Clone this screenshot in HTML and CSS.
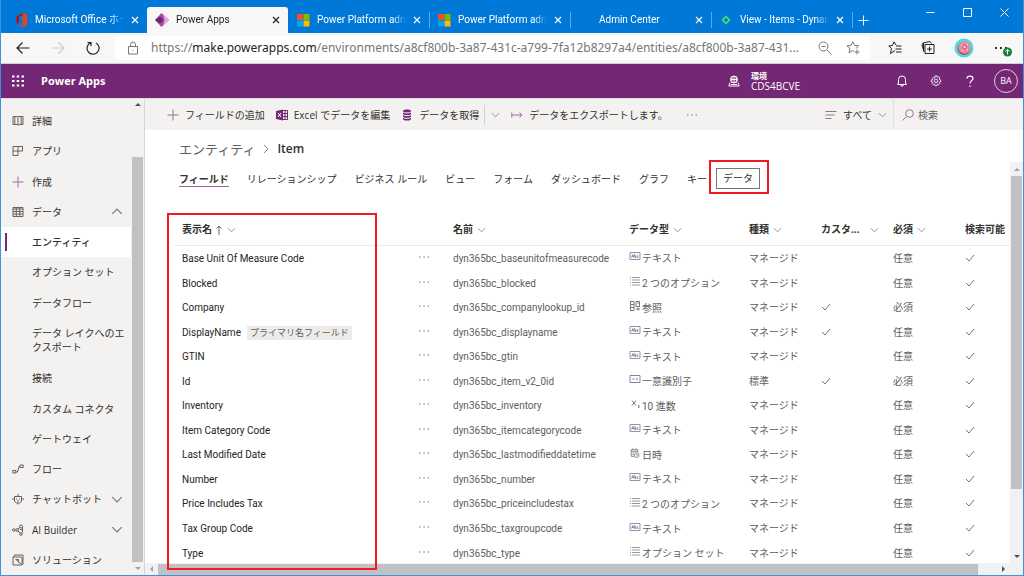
FILE: index.html
```html
<!DOCTYPE html>
<html lang="ja">
<head>
<meta charset="utf-8">
<title>Power Apps</title>
<link rel="stylesheet" href="styles.css">
</head>
<body>
<svg class="defs" aria-hidden="true">
  <symbol id="x" viewBox="0 0 8 8"><path d="M1 1l6 6M7 1L1 7"/></symbol>
  <symbol id="down" viewBox="0 0 10 6"><path d="M1 1l4 4 4-4"/></symbol>
  <symbol id="up" viewBox="0 0 10 6"><path d="M1 5l4-4 4 4"/></symbol>
  <symbol id="check" viewBox="0 0 10 8"><path d="M1 4l3 3 5-6"/></symbol>
  <symbol id="dots" viewBox="0 0 12 2"><path d="M1 1h1.500M5.300 1h1.500M9.600 1h1.500"/></symbol>
  <symbol id="ms" viewBox="0 0 14 14"><path fill="#f25022" d="M1 1h6v6H1z"/><path fill="#7fba00" d="M7.500 1h6v6h-6z"/><path fill="#00a4ef" d="M1 7.500h6v6H1z"/><path fill="#ffb900" d="M7.500 7.500h6v6h-6z"/></symbol>
  <symbol id="abc" viewBox="0 0 12 10"><path stroke="#8a95b5" d="M1 1.500h10v7H1z"/><path stroke-width=".8" d="M2.500 6.500L3.800 3.500 5 6.500M3 5.500h1.500M5.800 3v3.500h1V4.800h-1M9.500 4.800H8.200v1.700h1.300"/></symbol>
  <symbol id="list" viewBox="0 0 12 10"><path stroke="#999" d="M1 1.500h1M1 4h1M1 6.500h1M1 9h1M3 1.500h8M3 4h8M3 6.500h8M3 9h8"/></symbol>
  <symbol id="lookup" viewBox="0 0 12 10"><path d="M1.500 .5v9M1 .5h4v9H1M1 3.500h4M1 6.500h4M7 .5h3.500v5M7 .5v5h4M8.500 2h2M7 8h4M9 6.500v3"/></symbol>
  <symbol id="guid" viewBox="0 0 12 10"><path stroke="#7d88ab" d="M1 1.500h10v7H1z"/><path d="M3.500 5h2M7 5h2"/></symbol>
  <symbol id="decimal" viewBox="0 0 12 10"><path d="M3 1.500l4 5M7 1.500l-4 5M9 6.500h1v2H9"/></symbol>
  <symbol id="date" viewBox="0 0 12 12"><path d="M5 10H1.500V2h8v3M1.500 4h8M3.500 .5v2M7.500 .5v2M3 6h2M3 8h1.500"/><circle cx="8" cy="8.500" r="2.800"/><path d="M8 7v1.500h1.500"/></symbol>
</svg>

<div class="window">
  <header class="tabstrip">
    <div class="tab">
      <svg class="tab-icon" viewBox="0 0 14 14"><path fill="#e8431b" d="M9 0l4 1.500v11L9 14l-6-2 5.500.5V2.500L5 3.500v6L2.500 11V3.500z"/><path fill="#a31410" d="M9 0L2.500 3.500V11L5 9.500v-6l3.500-1z"/></svg>
      <span class="tab-title">Microsoft Office ホー</span>
      <button class="tab-close" aria-label="閉じる"><svg><use href="#x"/></svg></button>
    </div>
    <div class="tab current">
      <svg class="tab-icon" viewBox="0 0 14 14"><path fill="#9f4aa0" d="M6.500 0L14 7l-7.500 7L0 7z"/><path fill="#e3a5df" d="M8 1.500L14 7l-6 5.500L9.500 7z"/><path fill="#6f2272" d="M5 3.500L8.500 7 5 10.500 0 7z"/></svg>
      <span class="tab-title">Power Apps</span>
      <button class="tab-close" aria-label="閉じる"><svg><use href="#x"/></svg></button>
    </div>
    <div class="tab">
      <svg class="tab-icon"><use href="#ms"/></svg>
      <span class="tab-title">Power Platform admi</span>
      <button class="tab-close" aria-label="閉じる"><svg><use href="#x"/></svg></button>
    </div>
    <div class="tab divided">
      <svg class="tab-icon"><use href="#ms"/></svg>
      <span class="tab-title">Power Platform admi</span>
      <button class="tab-close" aria-label="閉じる"><svg><use href="#x"/></svg></button>
    </div>
    <div class="tab divided">
      <span class="tab-icon"></span>
      <span class="tab-title">Admin Center</span>
      <button class="tab-close" aria-label="閉じる"><svg><use href="#x"/></svg></button>
    </div>
    <div class="tab divided">
      <svg class="tab-icon" viewBox="0 0 14 14"><path fill="#0c8b8b" d="M7 0l1.500 3.500h2v2L14 7l-3.500 1.500v2h-2L7 14l-1.500-3.500h-2v-2L0 7l3.500-1.500v-2h2z"/><path fill="#38d6c0" d="M7 2.500L11.500 7 7 11.500 2.500 7z"/><path fill="#08706f" d="M7 5l2 2-2 2-2-2z"/></svg>
      <span class="tab-title">View - Items - Dynar</span>
      <button class="tab-close" aria-label="閉じる"><svg><use href="#x"/></svg></button>
    </div>
    <button class="new-tab divided" aria-label="新しいタブ"><svg viewBox="0 0 12 12"><path d="M6 .5v11M.5 6h11"/></svg></button>
    <div class="window-buttons">
      <button aria-label="最小化"><svg viewBox="0 0 9 9"><path d="M.5 4.500h8"/></svg></button>
      <button aria-label="最大化"><svg viewBox="0 0 9 9"><path d="M.5.5h8v8h-8z"/></svg></button>
      <button aria-label="閉じる"><svg viewBox="0 0 9 9"><path d="M.5.5l8 8M8.500.5l-8 8"/></svg></button>
    </div>
  </header>

  <div class="toolbar">
    <button class="nav-btn" aria-label="戻る"><svg viewBox="0 0 14 14"><path d="M13.500 7H1M6.500 1.500L1 7l5.500 5.500"/></svg></button>
    <button class="nav-btn faded" aria-label="進む"><svg viewBox="0 0 14 14"><path d="M.5 7H13M7.500 1.500L13 7l-5.500 5.500"/></svg></button>
    <button class="nav-btn" aria-label="更新"><svg viewBox="0 0 14 14"><path d="M4.500 1.800A6 6 0 1 0 10 2M1.500 1.500h3.500V5"/></svg></button>
    <div class="address">
      <svg class="lock" viewBox="0 0 12 14"><path d="M1.500 5.500h9v7.500h-9zM3.500 5.500V3.500a2.500 2.500 0 0 1 5 0v2M6 9v.8"/></svg>
      <div class="url" role="textbox" contenteditable="true" aria-label="アドレス">https://<span class="host">make.powerapps.com</span>/environments/a8cf800b-3a87-431c-a799-7fa12b8297a4/entities/a8cf800b-3a87-431...</div>
      <button aria-label="縮小"><svg viewBox="0 0 14 14"><circle cx="5.500" cy="5.500" r="4.500"/><path d="M9 9l4.500 4.500M3.500 5.500h4"/></svg></button>
      <button aria-label="お気に入りに追加"><svg viewBox="0 0 14 14"><path d="M8 10.300L6.500 9.500 3 12l1-4.500L1 4.800l4-.5L6.800.8l1.800 3.500 4 .5L9.800 7.500M11 8.500v5M8.500 11h5"/></svg></button>
    </div>
    <div class="browser-tools">
      <button aria-label="お気に入り"><svg viewBox="0 0 14 14"><path d="M8 4L6 .8 4.500 4.500.8 5 3.500 7.500 2.500 12.500 7 9.500M8 5h5.500M7.500 8h6M8 11h5.500"/></svg></button>
      <button aria-label="コレクション"><svg viewBox="0 0 14 14"><path d="M4 3.500h9v9H4zM8.500 5.500v5M6 8h5M3 11L1 4l1-2 7-1.500 1.500 2M2.500 10V2"/></svg></button>
      <button aria-label="プロファイル"><svg class="profile" viewBox="0 0 20 20"><circle cx="10" cy="10" r="9.500" fill="#52d7df" stroke="none"/><circle cx="10" cy="10.500" r="6.500" fill="#a35f3f" stroke="none"/><circle cx="10.500" cy="9.500" r="6" fill="#f283ac" stroke="none"/><circle cx="10.500" cy="9" r="1.800" fill="#d8e8ec" stroke="#a95870"/><path stroke="#fff5a0" d="M7 7l1 1M13 12l1-1M8 12l1 1M13 6l1 1"/></svg></button>
      <button aria-label="設定など"><svg class="more" viewBox="0 0 20 20"><path stroke-width="1.800" d="M2 10h1.800M7 10h1.800M12 10h1.800"/><circle cx="14.500" cy="14" r="4.500" fill="#168038" stroke="none"/><path stroke="#fff" d="M14.500 16.500v-5M12.500 13.500l2-2 2 2"/></svg></button>
    </div>
  </div>

  <header class="appbar">
    <button class="waffle" aria-label="アプリ起動ツール"><svg viewBox="0 0 12 12"><path d="M0 1.500h2.500M4.700 1.500h2.500M9.500 1.500H12M0 6h2.500M4.700 6h2.500M9.500 6H12M0 10.500h2.500M4.700 10.500h2.500M9.500 10.500H12"/></svg></button>
    <span class="brand">Power Apps</span>
    <button class="environment">
      <svg viewBox="0 0 12 12"><circle cx="6" cy="4.500" r="3.500"/><path d="M2.500 4.500h7M6 1v7M4.200 1.700c-.8 2-.8 4 0 6M7.800 1.700c.8 2 .8 4 0 6M2 7.500L.8 11h10.400L10 7.500M3 9.500h6"/></svg>
      <span class="env-text"><b>環境</b><span>CDS4BCVE</span></span>
    </button>
    <div class="app-tools">
      <button aria-label="通知"><svg viewBox="0 0 12 12"><path d="M1.500 9.500h9L9.500 8V4.500a3.500 3.500 0 0 0-7 0V8zM4.800 10c.2 1.800 2.200 1.800 2.400 0"/></svg></button>
      <button aria-label="設定"><svg viewBox="0 0 14 14"><path d="M6 1h2l.4 1.700 1.500-.9 1.500 1.500-.9 1.400L12.500 6v2l-1.900.5.8 1.500-1.500 1.500-1.500-.8L8 12.500H6l-.5-1.800-1.500.8L2.500 10l.9-1.500L1.500 8V6l1.900-.4-.9-1.400L4 2.700l1.500.9z"/><circle cx="7" cy="6.800" r="2"/></svg></button>
      <button aria-label="ヘルプ"><svg viewBox="0 0 12 12"><path stroke-width="1.200" d="M3 3.500C3 .2 9 .2 9 3.500 9 5.500 6 5.500 6 8.500M6 10.500V12"/></svg></button>
      <button class="avatar">BA</button>
    </div>
  </header>

  <div class="body">
    <aside class="sidebar">
      <nav>
        <a class="item" href="#"><svg viewBox="0 0 12 12"><path d="M1 1.500h4.500l.5.5.5-.5H11v8H7l-1 1-1-1H1zM6 2v8M2.800 2v7M9.200 2v7"/></svg><span>詳細</span></a>
        <a class="item" href="#"><svg viewBox="0 0 12 12"><path d="M1 1.500h5v9H1zM1 6h9.500V1.500H6"/></svg><span>アプリ</span></a>
        <a class="item" href="#"><svg class="purple" viewBox="0 0 12 12"><path d="M6 .5v11M.5 6h11"/></svg><span>作成</span></a>
        <a class="item" href="#"><svg viewBox="0 0 12 12"><path d="M1 1.500h10v9H1zM1 3h10M1 5.500h10M1 8h10M4.300 2v8M7.700 2v8"/></svg><span>データ</span><svg class="chev"><use href="#up"/></svg></a>
        <a class="item sub active" href="#"><span>エンティティ</span></a>
        <a class="item sub" href="#"><span>オプション セット</span></a>
        <a class="item sub" href="#"><span>データフロー</span></a>
        <a class="item sub tall" href="#"><span>データ レイクへのエクスポート</span></a>
        <a class="item sub" href="#"><span>接続</span></a>
        <a class="item sub" href="#"><span>カスタム コネクタ</span></a>
        <a class="item sub" href="#"><span>ゲートウェイ</span></a>
        <a class="item" href="#"><svg viewBox="0 0 12 12"><path d="M.8 7.500h3v2.500h-3zM8 2h3.200v2.500H8zM4 9h1.500L7 3.500h1"/></svg><span>フロー</span></a>
        <a class="item" href="#"><svg viewBox="0 0 12 12"><path d="M2.500 3.500h7v5l-2 1.500h-3l-2-1.500zM6 3.500V1M1 5v2M11 5v2M4.500 5.500v1M7.500 5.500v1M5 8h2M6 10v1.500"/></svg><span>チャットボット</span><svg class="chev"><use href="#down"/></svg></a>
        <a class="item" href="#"><svg viewBox="0 0 12 12"><circle cx="1.800" cy="6" r="1.300"/><circle cx="5" cy="6" r="1.300"/><circle cx="9" cy="2.500" r="1.500"/><circle cx="9" cy="10" r="1.300"/><path d="M6 5l2-1.500M6 7l2 2M10.500 3v5.500M8 5.500h2.500"/></svg><span>AI Builder</span><svg class="chev"><use href="#down"/></svg></a>
        <a class="item" href="#"><svg viewBox="0 0 12 12"><path d="M2.500 1H11v9.500M1 3h8l1 1v7H1zM3 1L1 3M3.500 5.500h3v3M4 5.500L9 10"/></svg><span>ソリューション</span></a>
      </nav>
      <div class="vbar"><i class="arrow-up dark"></i><div class="thumb side-thumb"></div><i class="arrow-down"></i></div>
    </aside>

    <main>
      <div class="commands">
        <button class="cmd"><svg class="purple" viewBox="0 0 12 12"><path d="M6 .5v11M.5 6h11"/></svg>フィールドの追加</button>
        <button class="cmd"><svg viewBox="0 0 12 12"><path stroke="#742774" d="M6 1.500h5.500v9H6M6 4.500h5.500M6 7.500h5.500M9 2v8"/><path fill="#742774" stroke="none" d="M0 2l7-1.500v11L0 10z"/><path stroke="#fff" d="M2 4l3 4M5 4L2 8"/></svg>Excel でデータを編集</button>
        <button class="cmd"><svg viewBox="0 0 12 12"><path fill="#742774" stroke="none" d="M2 2c0-2 8-2 8 0v8c0 2-8 2-8 0z"/><path stroke="#f3f2f1" d="M2 3c1 1.300 7 1.300 8 0M2 5.700c1 1.300 7 1.300 8 0M2 8.400c1 1.300 7 1.300 8 0"/></svg>データを取得</button>
        <button class="split" aria-label="その他のデータ取得"><svg class="chev"><use href="#down"/></svg></button>
        <button class="cmd export"><svg class="purple" viewBox="0 0 12 12"><path d="M.8 3.500v5M1 6h10M8.500 3.500L11 6 8.500 8.500"/></svg>データをエクスポートします。</button>
        <button class="overflow" aria-label="その他"><svg class="dots"><use href="#dots"/></svg></button>
        <button class="cmd filter"><svg class="purple" viewBox="0 0 12 12"><path d="M.5 2.500h11M.5 6h9M.5 9.500h6"/></svg>すべて<svg class="chev"><use href="#down"/></svg></button>
        <label class="search"><svg class="purple" viewBox="0 0 12 12"><circle cx="7.500" cy="4.500" r="3.800"/><path d="M4.800 7.200L.5 11.500"/></svg><input type="search" placeholder="検索" aria-label="検索"></label>
      </div>

      <div class="workspace">
        <div class="crumbs"><a href="#">エンティティ</a><svg viewBox="0 0 6 10"><path d="M1 1l4 4-4 4"/></svg><b>Item</b></div>
        <nav class="pivots">
          <a class="selected" href="#">フィールド</a><a href="#">リレーションシップ</a><a href="#">ビジネス ルール</a><a href="#">ビュー</a><a href="#">フォーム</a><a href="#">ダッシュボード</a><a href="#">グラフ</a><a href="#">キー</a><a class="focused" href="#">データ<span class="mark pivot-mark"></span></a>
        </nav>
        <div class="grid">
          <table>
            <colgroup><col><col class="c-dots"><col class="c-name"><col class="c-type"><col class="c-small"><col class="c-small"><col class="c-small"><col class="c-last"></colgroup>
            <thead><tr><th>表示名<svg class="sort" viewBox="0 0 8 10"><path d="M4 10V1M1.500 3.500L4 1l2.500 2.500"/></svg><svg class="chev"><use href="#down"/></svg></th><th></th><th>名前<svg class="chev"><use href="#down"/></svg></th><th>データ型<svg class="chev"><use href="#down"/></svg></th><th>種類<svg class="chev"><use href="#down"/></svg></th><th>カスタ...<svg class="chev far"><use href="#down"/></svg></th><th>必須<svg class="chev"><use href="#down"/></svg></th><th>検索可能</th></tr></thead>
            <tbody>
              <tr><td>Base Unit Of Measure Code</td><td><svg class="dots"><use href="#dots"/></svg></td><td>dyn365bc_baseunitofmeasurecode</td><td><svg class="kind"><use href="#abc"/></svg>テキスト</td><td>マネージド</td><td></td><td>任意</td><td><svg class="check"><use href="#check"/></svg></td></tr>
              <tr><td>Blocked</td><td><svg class="dots"><use href="#dots"/></svg></td><td>dyn365bc_blocked</td><td><svg class="kind"><use href="#list"/></svg>2 つのオプション</td><td>マネージド</td><td></td><td>任意</td><td><svg class="check"><use href="#check"/></svg></td></tr>
              <tr><td>Company</td><td><svg class="dots"><use href="#dots"/></svg></td><td>dyn365bc_companylookup_id</td><td><svg class="kind"><use href="#lookup"/></svg>参照</td><td>マネージド</td><td><svg class="check"><use href="#check"/></svg></td><td>必須</td><td><svg class="check"><use href="#check"/></svg></td></tr>
              <tr><td>DisplayName<span class="tag">プライマリ名フィールド</span></td><td><svg class="dots"><use href="#dots"/></svg></td><td>dyn365bc_displayname</td><td><svg class="kind"><use href="#abc"/></svg>テキスト</td><td>マネージド</td><td><svg class="check"><use href="#check"/></svg></td><td>任意</td><td><svg class="check"><use href="#check"/></svg></td></tr>
              <tr><td>GTIN</td><td><svg class="dots"><use href="#dots"/></svg></td><td>dyn365bc_gtin</td><td><svg class="kind"><use href="#abc"/></svg>テキスト</td><td>マネージド</td><td></td><td>任意</td><td><svg class="check"><use href="#check"/></svg></td></tr>
              <tr><td>Id</td><td><svg class="dots"><use href="#dots"/></svg></td><td>dyn365bc_item_v2_0id</td><td><svg class="kind"><use href="#guid"/></svg>一意識別子</td><td>標準</td><td><svg class="check"><use href="#check"/></svg></td><td>必須</td><td><svg class="check"><use href="#check"/></svg></td></tr>
              <tr><td>Inventory</td><td><svg class="dots"><use href="#dots"/></svg></td><td>dyn365bc_inventory</td><td><svg class="kind"><use href="#decimal"/></svg>10 進数</td><td>マネージド</td><td></td><td>任意</td><td><svg class="check"><use href="#check"/></svg></td></tr>
              <tr><td>Item Category Code</td><td><svg class="dots"><use href="#dots"/></svg></td><td>dyn365bc_itemcategorycode</td><td><svg class="kind"><use href="#abc"/></svg>テキスト</td><td>マネージド</td><td></td><td>任意</td><td><svg class="check"><use href="#check"/></svg></td></tr>
              <tr><td>Last Modified Date</td><td><svg class="dots"><use href="#dots"/></svg></td><td>dyn365bc_lastmodifieddatetime</td><td><svg class="kind"><use href="#date"/></svg>日時</td><td>マネージド</td><td></td><td>任意</td><td><svg class="check"><use href="#check"/></svg></td></tr>
              <tr><td>Number</td><td><svg class="dots"><use href="#dots"/></svg></td><td>dyn365bc_number</td><td><svg class="kind"><use href="#abc"/></svg>テキスト</td><td>マネージド</td><td></td><td>任意</td><td><svg class="check"><use href="#check"/></svg></td></tr>
              <tr><td>Price Includes Tax</td><td><svg class="dots"><use href="#dots"/></svg></td><td>dyn365bc_priceincludestax</td><td><svg class="kind"><use href="#list"/></svg>2 つのオプション</td><td>マネージド</td><td></td><td>任意</td><td><svg class="check"><use href="#check"/></svg></td></tr>
              <tr><td>Tax Group Code</td><td><svg class="dots"><use href="#dots"/></svg></td><td>dyn365bc_taxgroupcode</td><td><svg class="kind"><use href="#abc"/></svg>テキスト</td><td>マネージド</td><td></td><td>任意</td><td><svg class="check"><use href="#check"/></svg></td></tr>
              <tr><td>Type</td><td><svg class="dots"><use href="#dots"/></svg></td><td>dyn365bc_type</td><td><svg class="kind"><use href="#list"/></svg>オプション セット</td><td>マネージド</td><td></td><td>任意</td><td><svg class="check"><use href="#check"/></svg></td></tr>
            </tbody>
          </table>
          <div class="mark column-mark"></div>
        </div>
        <div class="vbar main-vbar"><i class="arrow-up"></i><div class="thumb main-thumb"></div><i class="arrow-down dark"></i></div>
        <div class="hbar"><i class="arrow-left"></i><div class="thumb"></div><i class="arrow-right"></i></div>
      </div>
    </main>
  </div>
</div>
</body>
</html>
```
FILE: styles.css
```css
* { box-sizing: border-box; }
body {
  margin: 0;
  font-family: "Open Sans", "Noto Sans CJK JP", sans-serif;
  font-size: 10px;
  line-height: 14px;
  color: #323130;
}
button, input { font: inherit; color: inherit; background: none; border: 0; padding: 0; margin: 0; }
a { color: inherit; text-decoration: none; }
svg { display: block; flex: none; fill: none; stroke: currentColor; stroke-width: 1; }
.defs { position: absolute; width: 0; height: 0; }

.window { display: flex; flex-direction: column; height: 100vh; min-height: 560px; border: 1px solid #3a94dd; border-top: 0; overflow: hidden; }
.tab, td { font-family: Roboto, "Noto Sans CJK JP", sans-serif; }

/* Browser tabs */
.tabstrip { display: flex; align-items: flex-end; flex: none; height: 33px; padding-left: 5px; background: #0078d7; color: #fff; }
.tab { display: flex; align-items: center; flex: 0 1 141px; min-width: 0; height: 26px; padding: 0 8px; gap: 7px; }
.tab.current { background: #f7f7f7; color: #222; border-radius: 3px 3px 0 0; }
.tab-icon { width: 14px; height: 14px; flex: none; stroke: none; }
.tab-title { flex: 1; min-width: 0; white-space: nowrap; mask-image: linear-gradient(90deg, #000 85%, transparent); }
.tab-close { flex: none; }
.tab-close svg { width: 8px; height: 8px; stroke-width: 1.2; }
.divided { background: linear-gradient(#5aa9e8, #5aa9e8) left center / 1px 16px no-repeat; }
.new-tab { height: 26px; padding: 0 6px; }
.new-tab svg { width: 11px; height: 11px; }
.window-buttons { display: flex; gap: 28px; margin-left: auto; padding-right: 14px; align-self: flex-start; padding-top: 8px; }
.window-buttons svg { width: 9px; height: 9px; }

/* Address row */
.toolbar { display: flex; align-items: center; flex: none; height: 31px; padding-left: 15px; background: #f7f7f7; border-bottom: 1px solid #d2d0d2; }
.nav-btn { margin-right: 21px; color: #222; }
.nav-btn svg { width: 14px; height: 14px; stroke-width: 1.2; }
.nav-btn.faded { color: #ccc; }
.address { display: flex; align-items: center; flex: 1; min-width: 0; height: 24px; margin-left: -6px; padding: 0 10px 0 12px; background: #fff; border-radius: 3px; color: #777; }
.lock { width: 12px; height: 14px; margin-right: 12px; }
.url { flex: 1; min-width: 0; overflow: hidden; white-space: nowrap; font-family: "Noto Sans", sans-serif; font-size: 12px; line-height: 20px; color: #767676; }
.host { color: #222; }
.address button { margin-left: 14px; }
.address button svg { width: 14px; height: 14px; }
.browser-tools { display: flex; align-items: center; gap: 19px; padding: 0 10px 0 18px; color: #222; }
.browser-tools svg { width: 14px; height: 14px; }
.browser-tools svg.profile, .browser-tools svg.more { width: 20px; height: 20px; }

/* Product bar */
.appbar { display: flex; align-items: center; flex: none; height: 34px; padding: 0 5px 0 11px; background: #742774; color: #fff; }
.waffle svg { width: 12px; height: 12px; stroke-width: 2; }
.brand { margin-left: 17px; font-size: 11px; font-weight: 700; }
.environment { display: flex; align-items: center; gap: 11px; margin-left: auto; text-align: left; }
.environment svg { width: 12px; height: 12px; }
.env-text { display: flex; flex-direction: column; line-height: 11px; }
.env-text b { font-size: 8px; }
.app-tools { display: flex; align-items: center; gap: 22px; margin-left: 96px; }
.app-tools svg { width: 12px; height: 12px; }
.avatar { width: 24px; height: 24px; margin-left: -4px; border: 1px solid #e0cfe0; border-radius: 50%; font-size: 9px; }

.body { display: flex; flex: 1; min-height: 0; border-top: 1px solid #dcdada; }

/* Left navigation */
.sidebar { display: flex; flex: none; width: 144px; background: #f3f2f1; border-right: 1px solid #d8d6d6; }
.sidebar nav { display: flex; flex-direction: column; flex: 1; padding-top: 7px; }
.item { display: flex; align-items: center; flex: 1 1 30px; gap: 8px; padding: 0 8px 0 11px; }
.item > svg { width: 12px; height: 12px; color: #66605f; }
.item > span { flex: 1; }
.item > svg.chev { width: 12px; height: 7px; color: #777; }
.item.sub { padding-left: 31px; padding-right: 0; }
.item.tall { flex-basis: 45px; }
.item.active { background: linear-gradient(#742774, #742774) 4px center / 2px 18px no-repeat, #fff; font-weight: 500; }
.purple, .item > svg.purple { color: #9a6c9d; }

/* Scroll bars */
.vbar { display: flex; flex-direction: column; align-items: center; width: 13px; background: #f1f1f1; }
.thumb { background: #c1c1c1; }
.side-thumb { width: 11px; flex: 1; margin-top: 51px; }
.vbar i, .hbar i { flex: none; width: 0; height: 0; border: 3px solid transparent; color: #a3a3a3; }
i.arrow-up { margin: 4px 0 0; border-bottom-color: currentColor; border-top: 0; }
i.arrow-down { margin: 5px 0; border-top-color: currentColor; border-bottom: 0; }
i.arrow-left { margin: 0 5px; border-right-color: currentColor; border-left: 0; }
.hbar i.arrow-right { margin: 0 18px 0 0; border-left-color: #505050; border-right: 0; }
.vbar i.dark { color: #505050; }

/* Command bar */
main { display: flex; flex-direction: column; flex: 1; min-width: 0; background: #fff; }
.commands { display: flex; align-items: center; flex: none; height: 31px; padding-left: 22px; background: #f3f2f1; white-space: nowrap; }
.cmd { display: flex; align-items: center; gap: 6px; margin-right: 11px; }
.cmd > svg { width: 12px; height: 12px; }
.chev { width: 9px; height: 6px; color: #888; }
.cmd > .chev { width: 9px; height: 6px; }
.split { display: flex; align-items: center; height: 20px; padding: 0 6px; margin: 0 5px 0 -6px; border-left: 1px solid #d2d0ce; }
.export { margin-right: 18px; }
.dots { width: 12px; height: 2px; color: #777; }
.filter { margin: 0 6px 0 auto; }
.search { display: flex; align-items: center; gap: 4px; width: 130px; height: 31px; padding-left: 8px; border-left: 1px solid #e1dfdd; }
.search svg { width: 12px; height: 12px; }
.search input { flex: 1; min-width: 0; outline: 0; }
.search input::placeholder { color: #605e5c; }

/* Entity page */
.workspace { display: grid; grid-template-columns: 1fr 13px; grid-template-rows: 32px 33px 1fr 12px; flex: 1; min-height: 0; }
.crumbs { display: flex; align-items: center; grid-column: 1 / 3; gap: 8px; padding: 5px 0 0 34px; font-size: 13px; line-height: 18px; color: #605e5c; }
.crumbs svg { width: 6px; height: 10px; color: #888; }
.crumbs b { font-weight: 600; font-size: 12px; color: #323130; }
.pivots { display: flex; align-items: center; gap: 18px; padding-left: 34px; white-space: nowrap; grid-row: 2; }
.pivots .selected { font-weight: 700; box-shadow: 0 1px #a0609f; }
.pivots .focused { position: relative; margin: 0 -9px; padding: 0 6px; border: 1px solid #777; line-height: 19px; }
.mark { position: absolute; border: 2px solid #ed1c24; pointer-events: none; }
.pivot-mark { inset: -9px -10px -6px -8px; }

.grid { position: relative; grid-row: 3; min-height: 0; padding: 18px 0 0 29px; }
.column-mark { left: 22px; top: 18px; width: 210px; bottom: -7px; z-index: 1; }
table { width: 100%; height: calc(100% + 2px); border-collapse: collapse; table-layout: fixed; }
th, td { padding: 0 0 0 8px; text-align: left; white-space: nowrap; vertical-align: middle; }
th { height: 32px; font-weight: 700; border-bottom: 1px solid #edebe9; }
td { padding-top: 2px; color: #605e5c; }
td:first-child { color: #252423; }
th svg { display: inline-block; vertical-align: middle; }
td svg { display: inline-block; vertical-align: baseline; }
th .chev { margin-left: 4px; }
th .far { margin-left: 10px; }
.sort { width: 8px; height: 10px; margin-left: 3px; color: #666; }
.check { width: 10px; height: 8px; color: #777; }
td .dots { vertical-align: 4px; }
td .kind { width: 12px; height: 10px; margin-right: 1px; vertical-align: 1px; color: #777; }
.tag { display: inline-block; margin-left: 6px; padding: 0 3px; font-size: 9px; background: #edebe9; color: #605e5c; }
.c-dots { width: 35px; }
.c-name { width: 176px; }
.c-type { width: 120px; }
.c-small { width: 72px; }
.c-last { width: 53px; }

.main-vbar { grid-column: 2; grid-row: 2 / 4; }
.main-vbar i.arrow-up { margin: 6px 0 5px; }
.main-thumb { width: 11px; height: 313px; }
.main-vbar i.arrow-down { margin-top: auto; }
.hbar { grid-column: 1 / 3; grid-row: 4; display: flex; align-items: center; background: #f1f1f1; position: relative; }
.hbar .thumb { flex: 1; height: 11px; margin-right: 24px; }
```
